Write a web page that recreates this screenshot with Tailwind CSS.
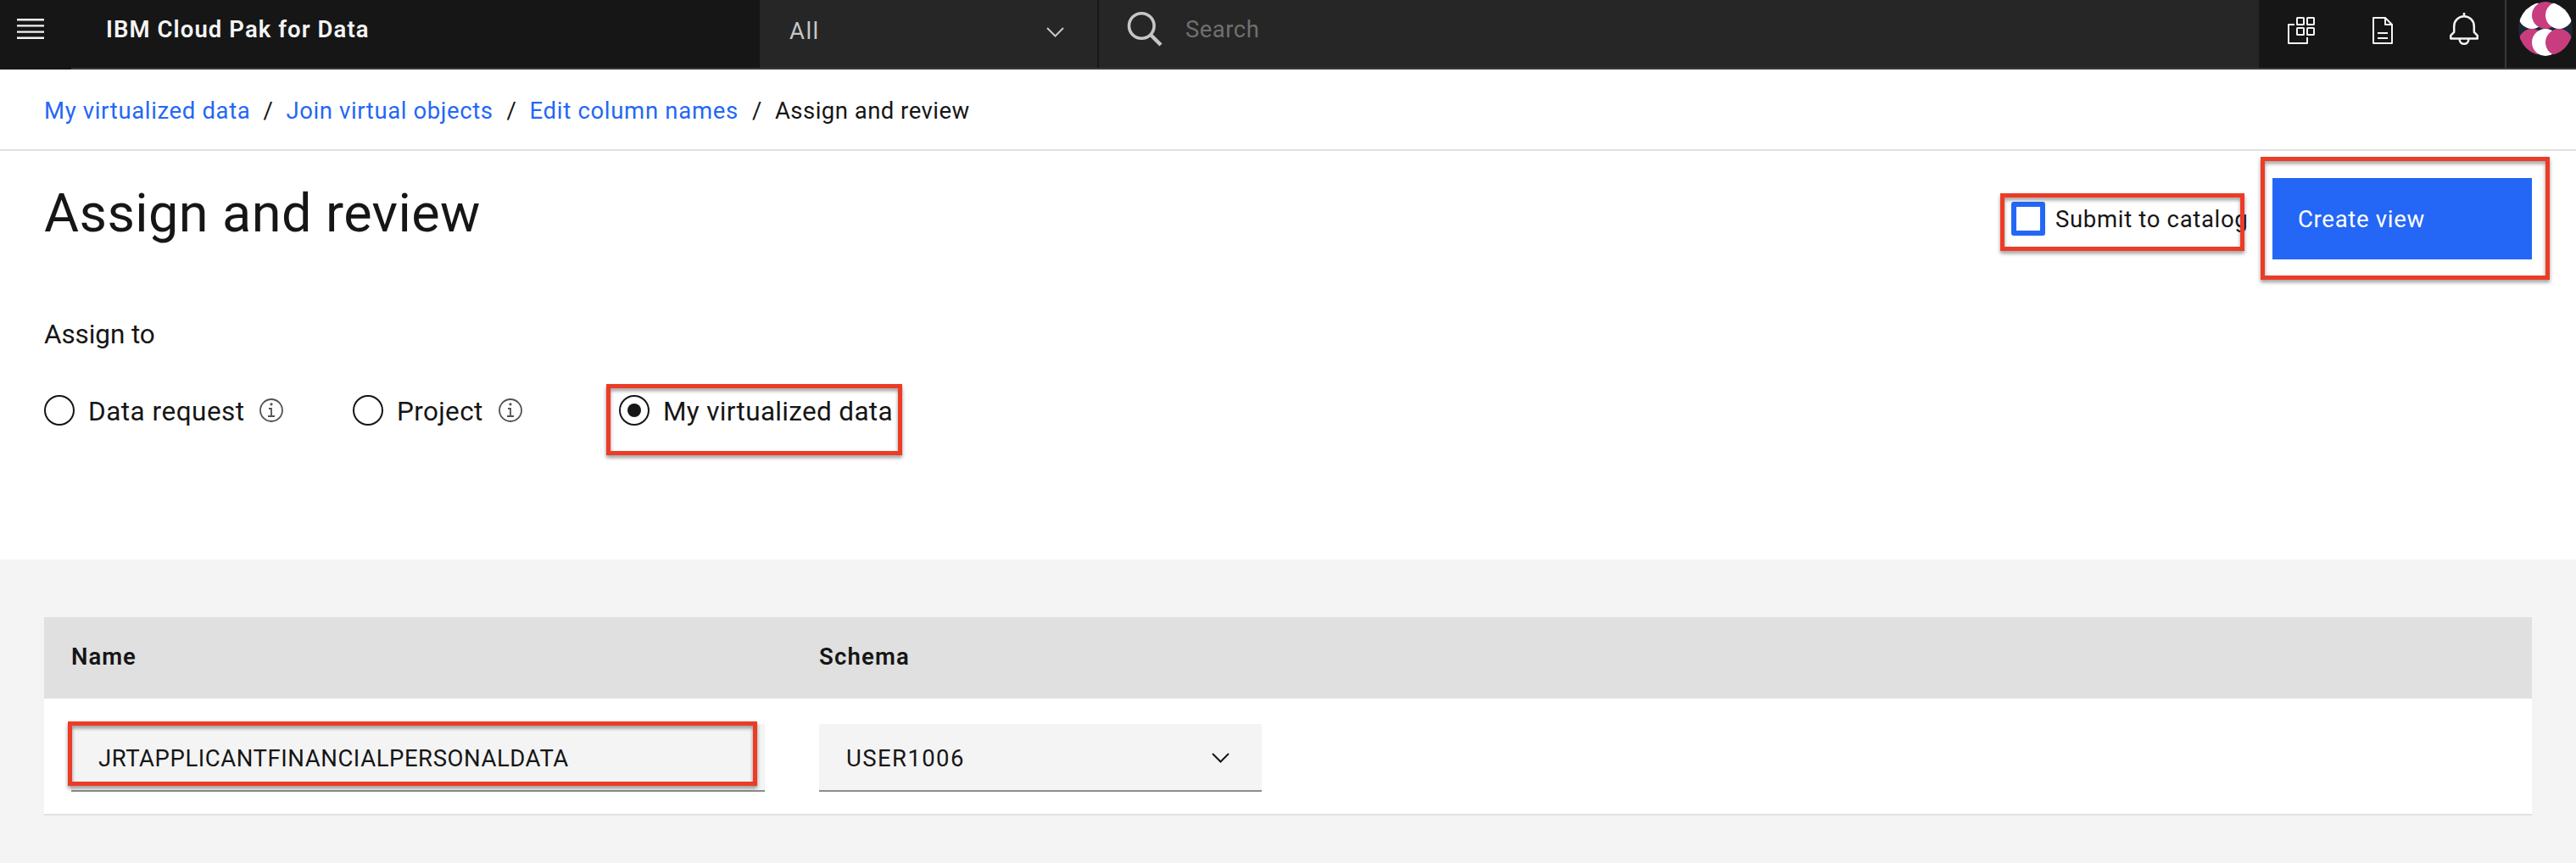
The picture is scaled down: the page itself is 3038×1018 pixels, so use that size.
<!DOCTYPE html>
<html lang="en">
<head>
<meta charset="utf-8">
<title>IBM Cloud Pak for Data</title>
<script src="https://cdn.jsdelivr.net/npm/@tailwindcss/browser@4"></script>
</head>
<body class="relative w-[3038px] h-[1018px] overflow-hidden bg-white text-[#161616] font-['Roboto','Liberation_Sans',sans-serif] text-[27.5px] leading-[40px]">

<header class="flex h-[82px] bg-[#161616] text-[#f4f4f4]">
  <div class="w-[84px] shrink-0 pl-[20px] pt-[22px]">
    <svg width="32" height="24" viewBox="0 0 32 24" fill="#f4f4f4"><path d="M0 0h32v2.4H0zM0 7.2h32v2.4H0zM0 14.4h32v2.4H0zM0 21.6h32V24H0z"/></svg>
  </div>
  <div class="flex grow border-b-2 border-[#393939]">
    <div class="w-[812px] shrink-0 pl-[41px] pt-[15px] font-semibold tracking-[1.07px] whitespace-nowrap">IBM Cloud Pak for Data</div>
    <div class="flex w-[400px] shrink-0 justify-between border-r-2 border-[#161616] bg-[#262626] pl-[35px] pr-[39px] pt-[17px] text-[#c6c6c6] tracking-[1.44px]">
      <span>All</span>
      <svg class="mt-[15px]" width="21" height="12" viewBox="0 0 21 12" fill="none" stroke="#c6c6c6" stroke-width="2"><path d="M1 1l9.500 9.500L20 1"/></svg>
    </div>
    <div class="flex grow bg-[#262626] pl-[33px] text-[#6f6f6f]">
      <svg class="mt-[13px] shrink-0" width="42" height="42" viewBox="0 0 42 42" fill="none" stroke="#c6c6c6"><circle cx="17.300" cy="17.500" r="14.800" stroke-width="3.600"/><path d="M28 28l12 12" stroke-width="4.400"/></svg>
      <span class="ml-[27px] pt-[15px] tracking-[0.47px]">Search</span>
    </div>
    <div class="flex w-[292px] shrink-0 border-r-2 border-[#393939]">
      <svg class="ml-[34px] mt-[20px] shrink-0" width="32" height="32" viewBox="0 0 32 32" fill="none" stroke="#f4f4f4" stroke-width="2" stroke-linejoin="round"><rect x="11" y="1" width="8" height="8" rx=".5"/><rect x="23" y="1" width="8" height="8" rx=".5"/><rect x="11" y="13" width="8" height="8" rx=".5"/><rect x="23" y="13" width="8" height="8" rx=".5"/><path d="M8 9H1v22h22v-7"/></svg>
      <svg class="ml-[68px] mt-[20px] shrink-0" width="24" height="32" viewBox="0 0 24 32" fill="none" stroke="#f4f4f4" stroke-width="2" stroke-linejoin="round"><path d="M1 1h14l8 8v22H1zM15 1v8h8M6 19h12M6 25h12"/></svg>
      <svg class="ml-[67px] mt-[15px] shrink-0" width="34" height="39" viewBox="0 0 34 39" fill="none" stroke="#f4f4f4" stroke-width="2.500" stroke-linejoin="round"><path d="M17 0v4M1.250 30.600v-3.800L5.200 22.800V16a11.800 11.800 0 0 1 23.600 0v6.800l3.950 4v3.800zM11.700 31.500a5.300 5.300 0 0 0 10.600 0"/></svg>
    </div>
    <div class="w-[82px] shrink-0 pl-[14px] pt-[2px]">
      <svg width="64" height="64" viewBox="0 0 64 64"><defs><clipPath id="av"><circle cx="32" cy="32" r="32"/></clipPath></defs><g clip-path="url(#av)"><path fill="#192a35" d="M0 0h64v64H0z"/><circle cx="16" cy="16" r="16" fill="#fff"/><circle cx="32" cy="16" r="16" fill="#c83d7e"/><circle cx="48" cy="16" r="16" fill="#fff"/><circle cx="16" cy="48" r="16" fill="#c83d7e"/><circle cx="32" cy="48" r="16" fill="#fff"/><circle cx="48" cy="48" r="16" fill="#c83d7e"/></g></svg>
    </div>
  </div>
</header>

<nav class="flex h-[96px] border-b-2 border-[#e0e0e0] pl-[52px] pt-[29px] whitespace-nowrap text-[#2467f6]">
  <a class="w-[243.500px] tracking-[0.65px]">My virtualized data</a>
  <span class="w-[42px] pl-[15px] text-[#161616]">/</span>
  <a class="w-[245px] tracking-[0.6px]">Join virtual objects</a>
  <span class="w-[42px] pl-[15px] text-[#161616]">/</span>
  <a class="w-[246.400px] tracking-[0.7px]">Edit column names</a>
  <span class="w-[43px] pl-[16px] text-[#161616]">/</span>
  <span class="text-[#161616] tracking-[0.48px]">Assign and review</span>
</nav>

<main>
  <section class="h-[482px] pl-[52px] pr-[52px] pt-[32px]">
    <div class="flex h-[96px] justify-between whitespace-nowrap">
      <h1 class="text-[63px] leading-[83px] tracking-[0.41px]">Assign and review</h1>
      <div class="flex">
        <label class="flex w-[308px] items-center gap-[12px]"><span class="size-[40px] shrink-0 rounded-[3px] border-6 border-[#2467f6] bg-white"></span><span class="pt-[2px] tracking-[0.68px]">Submit to catalog</span></label>
        <button class="flex w-[306px] items-center bg-[#2467f6] pl-[30px] pt-[2px] text-white tracking-[0.7px]">Create view</button>
      </div>
    </div>
    <p class="mt-[69px] text-[31.500px] tracking-[-0.1px]">Assign to</p>
    <div class="mt-[51px] flex h-[36px] items-center text-[31.500px] whitespace-nowrap">
      <span class="size-[36px] shrink-0 rounded-full border-2 border-[#161616]"></span>
      <span class="ml-[16px] w-[184.500px] pt-[3px] tracking-[0.5px]">Data request</span>
      <svg class="ml-[17.500px] shrink-0" width="28" height="28" viewBox="0 0 28 28" fill="none" stroke="#525252" stroke-width="1.800"><circle cx="14" cy="14" r="13"/><path d="M11 12h3v9M10 21h8"/><circle cx="14" cy="6.800" r="1.600" fill="#525252" stroke="none"/></svg>
      <span class="ml-[82px] size-[36px] shrink-0 rounded-full border-2 border-[#161616]"></span>
      <span class="ml-[16px] w-[102px] pt-[3px] tracking-[0.34px]">Project</span>
      <svg class="ml-[18px] shrink-0" width="28" height="28" viewBox="0 0 28 28" fill="none" stroke="#525252" stroke-width="1.800"><circle cx="14" cy="14" r="13"/><path d="M11 12h3v9M10 21h8"/><circle cx="14" cy="6.800" r="1.600" fill="#525252" stroke="none"/></svg>
      <span class="ml-[114px] flex size-[36px] shrink-0 items-center justify-center rounded-full border-2 border-[#161616]"><span class="size-[16px] rounded-full bg-[#161616]"></span></span>
      <span class="ml-[16px] pt-[3px] tracking-[0.33px]">My virtualized data</span>
    </div>
  </section>

  <section class="h-[358px] bg-[#f4f4f4] px-[52px] pt-[68px]">
    <div class="grid h-[96px] grid-cols-[882px_1fr] items-center bg-[#e0e0e0] pb-[2px] pl-[32px] font-semibold">
      <span class="tracking-[0.96px]">Name</span>
      <span class="tracking-[1.17px]">Schema</span>
    </div>
    <div class="grid h-[138px] grid-cols-[882px_1fr] border-b-2 border-[#e0e0e0] bg-white pl-[32px] pt-[30px]">
      <div class="h-[80px] w-[818px] border-b-2 border-[#8d8d8d] bg-[#f4f4f4] pl-[32px] pt-[21px] tracking-[0.56px]">JRTAPPLICANTFINANCIALPERSONALDATA</div>
      <div class="flex h-[80px] w-[522px] justify-between border-b-2 border-[#8d8d8d] bg-[#f4f4f4] pl-[32px] pr-[38px] pt-[21px] tracking-[1.41px]">
        <span>USER1006</span>
        <svg class="mt-[13px]" width="21" height="12" viewBox="0 0 21 12" fill="none" stroke="#161616" stroke-width="2"><path d="M1 1l9.500 9.500L20 1"/></svg>
      </div>
    </div>
  </section>
</main>

<!-- Highlight boxes laid over the controls -->
<div class="absolute left-[2359px] top-[228px] h-[68px] w-[288px] border-5 border-[#ec3c26] drop-shadow-[0_3px_2px_rgba(0,0,0,0.4)]"></div>
<div class="absolute left-[2666px] top-[185px] h-[145px] w-[341px] border-5 border-[#ec3c26] drop-shadow-[0_3px_2px_rgba(0,0,0,0.4)]"></div>
<div class="absolute left-[715px] top-[453px] h-[84px] w-[349px] border-5 border-[#ec3c26] drop-shadow-[0_3px_2px_rgba(0,0,0,0.4)]"></div>
<div class="absolute left-[80px] top-[851px] h-[76px] w-[813px] border-5 border-[#ec3c26] drop-shadow-[0_3px_2px_rgba(0,0,0,0.4)]"></div>
</body>
</html>
